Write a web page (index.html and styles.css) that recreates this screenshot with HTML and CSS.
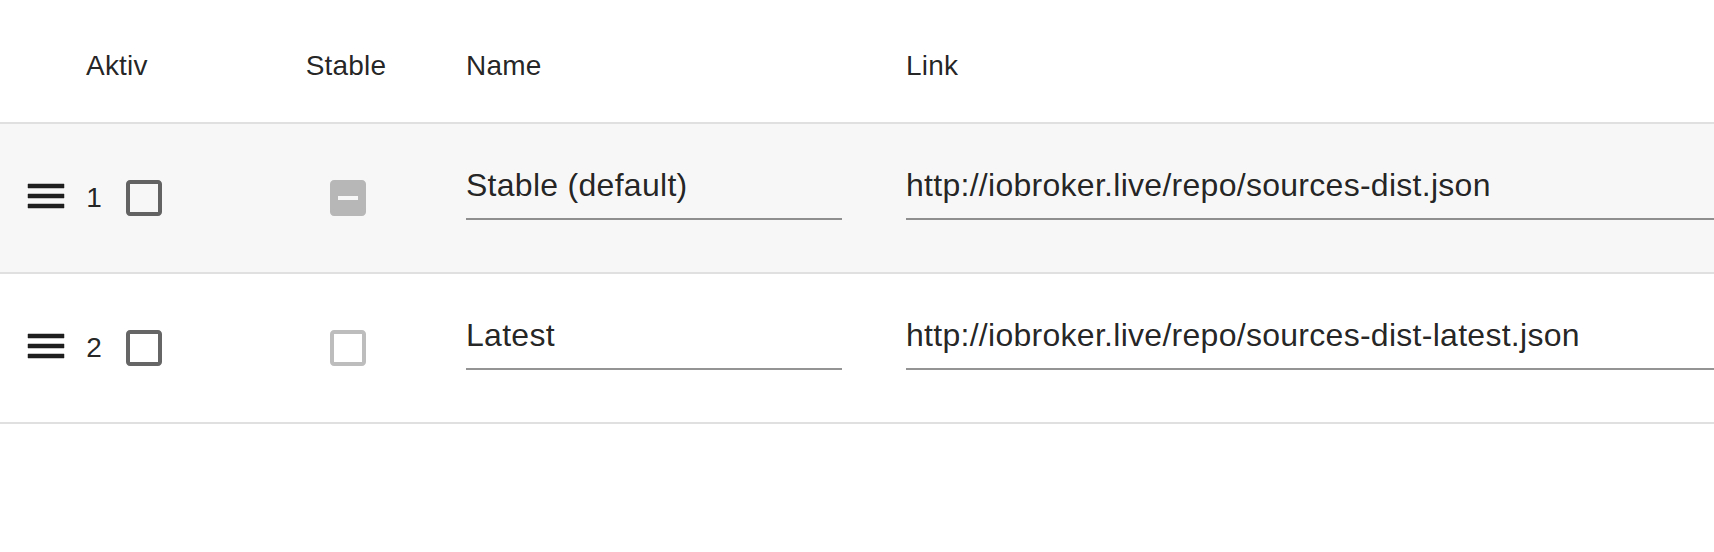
FILE: index.html
```html
<!DOCTYPE html>
<html lang="de">
<head>
<meta charset="utf-8">
<title>Repositories</title>
<link rel="stylesheet" href="styles.css">
</head>
<body>
<div class="table">
  <div class="row head">
    <div class="cell c-active">Aktiv</div>
    <div class="cell c-stable">Stable</div>
    <div class="cell c-name">Name</div>
    <div class="cell c-link">Link</div>
  </div>

  <div class="row body shaded">
    <div class="cell c-active">
      <svg class="handle" viewBox="0 0 24 24"><path d="M3 18h18v-2H3v2zm0-5h18v-2H3v2zm0-7v2h18V6H3z"/></svg>
      <span class="num">1</span>
      <svg class="cb" viewBox="0 0 24 24"><path d="M19 5v14H5V5h14m0-2H5c-1.11 0-2 .9-2 2v14c0 1.1.89 2 2 2h14c1.1 0 2-.9 2-2V5c0-1.1-.9-2-2-2z"/></svg>
    </div>
    <div class="cell c-stable">
      <svg class="cb cb-disabled" viewBox="0 0 24 24"><path d="M19 3H5c-1.1 0-2 .9-2 2v14c0 1.1.9 2 2 2h14c1.1 0 2-.9 2-2V5c0-1.1-.9-2-2-2zm-2 10H7v-2h10v2z"/></svg>
    </div>
    <div class="cell c-name"><div class="field name-field">Stable (default)</div></div>
    <div class="cell c-link"><div class="field link-field">http://iobroker.live/repo/sources-dist.json</div></div>
  </div>

  <div class="row body">
    <div class="cell c-active">
      <svg class="handle" viewBox="0 0 24 24"><path d="M3 18h18v-2H3v2zm0-5h18v-2H3v2zm0-7v2h18V6H3z"/></svg>
      <span class="num">2</span>
      <svg class="cb" viewBox="0 0 24 24"><path d="M19 5v14H5V5h14m0-2H5c-1.11 0-2 .9-2 2v14c0 1.1.89 2 2 2h14c1.1 0 2-.9 2-2V5c0-1.1-.9-2-2-2z"/></svg>
    </div>
    <div class="cell c-stable">
      <svg class="cb cb-disabled" viewBox="0 0 24 24"><path d="M19 5v14H5V5h14m0-2H5c-1.11 0-2 .9-2 2v14c0 1.1.89 2 2 2h14c1.1 0 2-.9 2-2V5c0-1.1-.9-2-2-2z"/></svg>
    </div>
    <div class="cell c-name"><div class="field name-field">Latest</div></div>
    <div class="cell c-link"><div class="field link-field">http://iobroker.live/repo/sources-dist-latest.json</div></div>
  </div>
</div>
</body>
</html>
```

FILE: styles.css
```css
html, body {
  margin: 0;
  padding: 0;
  background: #ffffff;
}

body {
  font-family: "Liberation Sans", Arial, Helvetica, sans-serif;
  color: rgba(0, 0, 0, 0.87);
  overflow: hidden;
}

.table {
  width: 100%;
}

.row {
  display: grid;
  grid-template-columns: 280px 136px 490px 1fr;
  border-bottom: 2px solid #e0e0e0;
}

.head {
  height: 122px;
  font-size: 28px;
  line-height: 40px;
  letter-spacing: 0.2px;
}

.head .cell {
  padding-top: 46px;
  white-space: nowrap;
}

.head .c-active {
  padding-left: 86px;
}

.head .c-stable {
  text-align: center;
  padding-right: 4px;
}

.head .c-name {
  padding-left: 50px;
}

.head .c-link {
  padding-left: 0;
}

.body {
  height: 148px;
}

.body .cell {
  display: flex;
  align-items: center;
  min-width: 0;
}

.shaded {
  background: #f7f7f7;
}

.handle {
  width: 48px;
  height: 48px;
  fill: #1f1f1f;
  stroke: #1f1f1f;
  stroke-width: 0.25;
  margin-left: 22px;
  margin-bottom: 4px;
  flex: none;
}

.num {
  width: 48px;
  text-align: center;
  font-size: 28px;
  flex: none;
}

.cb {
  width: 48px;
  height: 48px;
  fill: rgba(0, 0, 0, 0.6);
  margin-left: 2px;
  flex: none;
}

.body .c-stable {
  justify-content: center;
}

.body .c-stable .cb {
  margin-left: 0;
}

.cb-disabled {
  fill: rgba(0, 0, 0, 0.26);
}

.body .c-name {
  padding-left: 50px;
}

.field {
  align-self: flex-start;
  margin-top: 30px;
  font-size: 32px;
  line-height: 46px;
  letter-spacing: 0.28px;
  padding: 8px 0 10px;
  border-bottom: 2px solid rgba(0, 0, 0, 0.42);
  white-space: nowrap;
  overflow: hidden;
}

.name-field {
  width: 376px;
}

.link-field {
  width: 100%;
}
```
